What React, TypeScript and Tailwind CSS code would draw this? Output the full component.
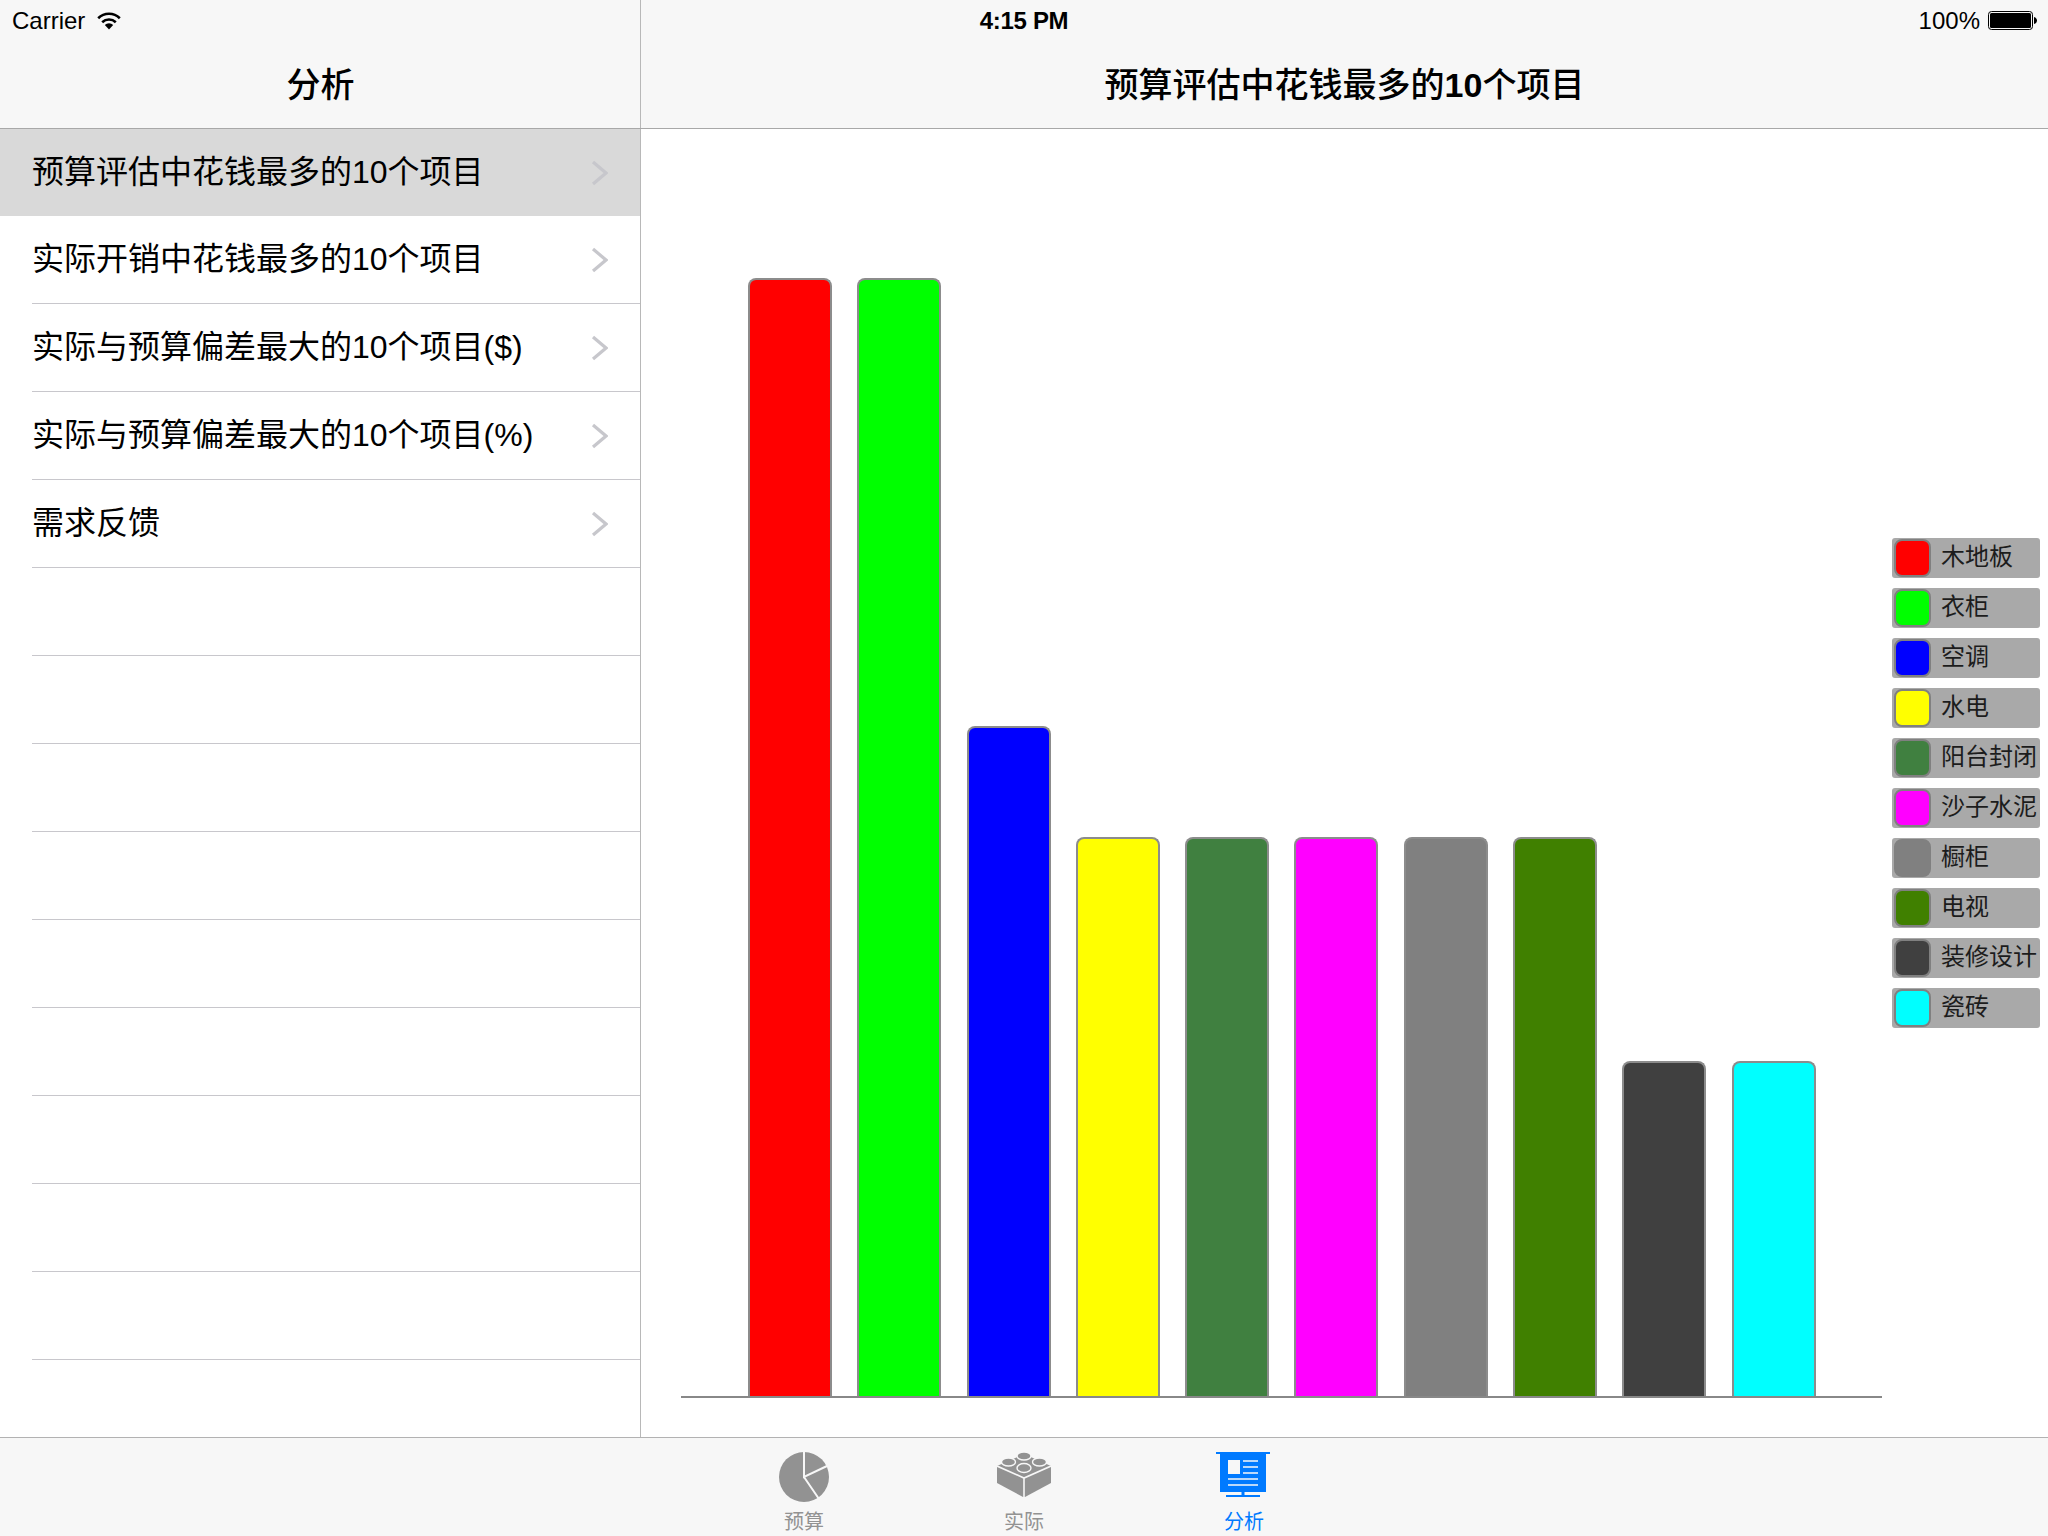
const rows = [
  "预算评估中花钱最多的10个项目",
  "实际开销中花钱最多的10个项目",
  "实际与预算偏差最大的10个项目($)",
  "实际与预算偏差最大的10个项目(%)",
  "需求反馈",
  "", "", "", "", "", "", "", "", "",
];

const bars = [
  { h: "h-[1118px]", c: "bg-[#ff0000]" },
  { h: "h-[1118px]", c: "bg-[#00ff00]" },
  { h: "h-[670px]", c: "bg-[#0000ff]" },
  { h: "h-[559px]", c: "bg-[#ffff00]" },
  { h: "h-[559px]", c: "bg-[#408040]" },
  { h: "h-[559px]", c: "bg-[#ff00ff]" },
  { h: "h-[559px]", c: "bg-[#808080]" },
  { h: "h-[559px]", c: "bg-[#408000]" },
  { h: "h-[335px]", c: "bg-[#404040]" },
  { h: "h-[335px]", c: "bg-[#00ffff]" },
];

const legend = [
  { t: "木地板", c: "bg-[#ff0000]" },
  { t: "衣柜", c: "bg-[#00ff00]" },
  { t: "空调", c: "bg-[#0000ff]" },
  { t: "水电", c: "bg-[#ffff00]" },
  { t: "阳台封闭", c: "bg-[#408040]" },
  { t: "沙子水泥", c: "bg-[#ff00ff]" },
  { t: "橱柜", c: "bg-[#808080]" },
  { t: "电视", c: "bg-[#408000]" },
  { t: "装修设计", c: "bg-[#404040]" },
  { t: "瓷砖", c: "bg-[#00ffff]" },
];

function Wifi() {
  return (
    <svg width="24" height="18" viewBox="0 0 24 18" fill="none" stroke="#000" strokeWidth="2.6">
      <path d="M1.2 6.2 A15.5 15.5 0 0 1 22.8 6.2" />
      <path d="M5.2 10.2 A10 10 0 0 1 18.8 10.2" />
      <path d="M12 17.5 L7.8 13 A6 6 0 0 1 16.2 13 Z" fill="#000" stroke="none" />
    </svg>
  );
}

function Battery() {
  return (
    <svg width="49" height="19" viewBox="0 0 49 19">
      <rect x="0.5" y="0.5" width="44" height="18" rx="3" fill="none" stroke="#000" />
      <rect x="2" y="2" width="41" height="15" rx="1.5" fill="#000" />
      <path d="M46 6 C48 6.5 49 8 49 9.5 C49 11 48 12.5 46 13 Z" fill="#000" />
    </svg>
  );
}

function Chevron() {
  return (
    <svg width="17" height="26" viewBox="0 0 17 26" fill="none" stroke="#c7c7cc" strokeWidth="3.2">
      <polyline points="2,2 15,13 2,24" />
    </svg>
  );
}

function PieIcon() {
  return (
    <svg width="50" height="50" viewBox="0 0 50 50">
      <circle cx="25" cy="25" r="25" fill="#929292" />
      <path d="M25 0 L25 25 L48 14 M25 25 L40 47" fill="none" stroke="#f7f7f7" strokeWidth="2" />
    </svg>
  );
}

function BrickIcon() {
  return (
    <svg width="54" height="45" viewBox="0 0 54 45">
      <path d="M27 2 L54 14 L54 31 L28 45 L26 45 L0 31 L0 14 Z" fill="#929292" />
      <path d="M0 14 L27 26 L54 14 M27 26 L27 45" fill="none" stroke="#f7f7f7" strokeWidth="1.6" />
      <ellipse cx="27" cy="4" rx="7" ry="4" fill="#929292" stroke="#f7f7f7" strokeWidth="1.4" />
      <ellipse cx="11.5" cy="10" rx="7" ry="4" fill="#929292" stroke="#f7f7f7" strokeWidth="1.4" />
      <ellipse cx="42.5" cy="10" rx="7" ry="4" fill="#929292" stroke="#f7f7f7" strokeWidth="1.4" />
      <ellipse cx="27" cy="16" rx="7" ry="4.5" fill="#929292" stroke="#f7f7f7" strokeWidth="1.4" />
    </svg>
  );
}

function ScreenIcon() {
  return (
    <svg width="54" height="45" viewBox="0 0 54 45">
      <rect x="0" y="0" width="54" height="2" fill="#007aff" />
      <rect x="4" y="2" width="46" height="38" fill="#007aff" />
      <rect x="25.5" y="40" width="3" height="3" fill="#007aff" />
      <rect x="10" y="43" width="34" height="2" fill="#007aff" />
      <rect x="12" y="8" width="12" height="14" fill="#f7f7f7" />
      <path d="M27 9 H42 M27 15 H42 M27 21 H42 M12 27 H42 M12 33 H42" stroke="#f7f7f7" strokeWidth="1.6" fill="none" />
    </svg>
  );
}

export default function App() {
  return (
    <div className="flex h-[1536px] w-[2048px] flex-col overflow-hidden bg-white font-['Liberation_Sans','Noto_Sans_CJK_SC',sans-serif] text-black">
      <header className="relative h-[129px] shrink-0 border-b border-[#a8a8a8] bg-[#f7f7f7]">
        <div className="absolute top-0 left-[640px] h-[128px] w-px bg-[#b8b8b8]" />
        <div className="grid h-[41px] grid-cols-3 items-center px-3 text-[24px]">
          <div className="flex items-center gap-3">
            <span>Carrier</span>
            <Wifi />
          </div>
          <div className="text-center font-bold tracking-[-0.3px]">4:15 PM</div>
          <div className="-mr-px flex items-center justify-end gap-2">
            <span>100%</span>
            <Battery />
          </div>
        </div>
        <div className="flex h-[87px] items-center pt-[2px] text-[34px] font-medium">
          <div className="w-[641px] text-center">分析</div>
          <div className="flex-1 text-center">
            预算评估中花钱最多的<span className="font-bold">10</span>个项目
          </div>
        </div>
      </header>

      <div className="flex min-h-0 flex-1">
        <aside className="w-[641px] shrink-0 overflow-hidden border-r border-[#b8b8b8] text-[32px]">
          {rows.map((r, i) => (
            <div key={i} className={i === 0 ? "bg-[#d9d9d9] pl-8" : "pl-8"}>
              <div className={i === 0 ? "flex h-[87px] items-center pr-[32px]" : "flex h-[88px] items-center border-b border-[#c8c7cc] pr-[32px]"}>
                <span className="flex-1 whitespace-nowrap pb-[2px]">{r}</span>
                {r && <Chevron />}
              </div>
            </div>
          ))}
        </aside>

        <main className="flex min-w-0 flex-1 items-center pr-2 pl-10">
          <div className="flex h-full w-[1201px] shrink-0 flex-col justify-end pb-[39px]">
            <div className="flex items-end gap-[25.3px] border-b-2 border-[#888888] pl-[67px]">
              {bars.map((b, i) => (
                <div key={i} className={`w-[84px] rounded-t-[8px] border-x-2 border-t-2 border-[#8c8c8c] ${b.h} ${b.c}`} />
              ))}
            </div>
          </div>
          <div className="ml-[10px] flex w-[148px] shrink-0 flex-col gap-[10px]">
            {legend.map((l) => (
              <div key={l.t} className="flex h-10 items-center rounded-[3px] bg-[#a9a9a9] pl-[2px] text-[24px] text-[#1c1c1c]">
                <div className={`h-[38px] w-[37px] shrink-0 rounded-[8px] border-2 border-[#808080] ${l.c}`} />
                <span className="ml-[10px] whitespace-nowrap pb-[2px]">{l.t}</span>
              </div>
            ))}
          </div>
        </main>
      </div>

      <nav className="flex h-[99px] shrink-0 justify-center border-t border-[#b2b2b2] bg-[#f7f7f7] text-[20px] text-[#929292]">
        <div className="flex w-[220px] flex-col items-center pt-[14px]">
          <div className="h-[58px]"><PieIcon /></div>
          <span className="leading-[28px]">预算</span>
        </div>
        <div className="flex w-[220px] flex-col items-center pt-[14px]">
          <div className="h-[58px]"><BrickIcon /></div>
          <span className="leading-[28px]">实际</span>
        </div>
        <div className="flex w-[220px] flex-col items-center pt-[14px] text-[#007aff]">
          <div className="-ml-[2px] h-[58px]"><ScreenIcon /></div>
          <span className="leading-[28px]">分析</span>
        </div>
      </nav>
    </div>
  );
}
